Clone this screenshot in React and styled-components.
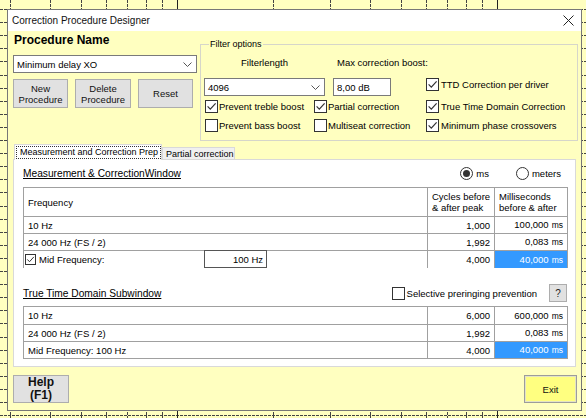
import React from 'react';
import styled, { createGlobalStyle } from 'styled-components';

const GlobalStyle = createGlobalStyle`
  html, body { margin: 0; padding: 0; background: #ffffc0; }
  body { font-family: "Liberation Sans", Arial, sans-serif; font-size: 9.5px; color: #000; }
  * { box-sizing: border-box; }
`;

const Page = styled.div`
  position: relative;
  width: 586px;
  height: 418px;
  overflow: hidden;
  background: #ffffc0;
  padding: 9px 0 0 7px;
`;

const GridLayer = styled.svg`
  position: absolute;
  left: 0;
  top: 0;
`;

const Window = styled.div`
  position: relative;
  width: 575px;
  height: 402px;
  border: 1px solid #777;
  display: flex;
  flex-direction: column;
  background: #ffffc0;
`;

const TitleBar = styled.div`
  height: 21px;
  background: #fff;
  display: flex;
  align-items: center;
  justify-content: space-between;
  padding: 0 7px 0 4px;
  font-size: 10px;
  color: #111;
`;

const Body = styled.div`
  flex: 1;
  display: flex;
  flex-direction: column;
  padding: 0 4px 0 5px;
`;

const TopSection = styled.div`
  display: flex;
  height: 110px;
`;

const LeftCol = styled.div`
  width: 187px;
  display: flex;
  flex-direction: column;
`;

const ProcTitle = styled.div`
  margin: 2px 0 0 1px;
  font-size: 12px;
  font-weight: bold;
  line-height: 14px;
`;

const Combo = styled.div`
  width: ${p => p.$w}px;
  height: 18px;
  margin-top: ${p => p.$mt || 0}px;
  border: 1px solid #7a7a7a;
  background: #fff;
  display: flex;
  align-items: center;
  justify-content: space-between;
  padding: 0 4px 0 3px;
`;

const ButtonRow = styled.div`
  width: 180px;
  margin-top: 6px;
  display: flex;
  justify-content: space-between;
`;

const PushButton = styled.button`
  width: ${p => p.$w}px;
  height: ${p => p.$h || 29}px;
  border: 1px solid #adadad;
  background: #e1e1e1;
  font-family: inherit;
  font-size: ${p => p.$fs || 9.5}px;
  font-weight: ${p => (p.$bold ? 'bold' : 'normal')};
  line-height: ${p => p.$lh || 11}px;
  color: #111;
  padding: 0;
  text-align: center;
`;

const ExitButton = styled(PushButton)`
  background: #ffff80;
  border: 1px solid #9c9c9c;
  box-shadow: inset 0 0 0 1px #e4e4c4;
`;

const FilterGroup = styled.fieldset`
  flex: 1;
  margin: 7px -1px 0 0;
  padding: 7px 0 8px 3px;
  border: 1px solid #d6d6ca;
  height: 103px;
  min-width: 0;
`;

const Legend = styled.legend`
  padding: 0 1px;
  margin-left: 5px;
  font-size: 9px;
  line-height: 12px;
`;

const FilterGrid = styled.div`
  display: grid;
  grid-template-columns: 110px 112px 1fr;
  grid-template-rows: 21px 22px 19px 13px;
  align-items: start;
`;

const FieldLabel = styled.div`
  white-space: nowrap;
  line-height: 12px;
  width: ${p => (p.$w ? `${p.$w}px` : 'auto')};
  margin-left: ${p => p.$ml || 0}px;
  text-align: ${p => (p.$center ? 'center' : 'left')};
`;

const TextInput = styled.div`
  width: ${p => p.$w}px;
  height: 18px;
  margin-left: ${p => p.$ml || 0}px;
  border: 1px solid #7a7a7a;
  background: #fff;
  padding: 0 3px;
  display: flex;
  align-items: center;
`;

const CheckRow = styled.label`
  display: flex;
  align-items: center;
  gap: ${p => p.$gap ?? 2}px;
  white-space: nowrap;
  margin-left: ${p => p.$ml || 0}px;
  line-height: 13px;
`;

const CheckBoxBox = styled.span`
  width: ${p => p.$size}px;
  height: ${p => p.$size}px;
  border: 1px solid #333;
  background: #fff;
  display: inline-flex;
  align-items: center;
  justify-content: center;
  flex-shrink: 0;
`;

const RadioCircle = styled.span`
  width: 13px;
  height: 13px;
  border: 1px solid #333;
  border-radius: 50%;
  background: #fff;
  display: inline-flex;
  align-items: center;
  justify-content: center;
  flex-shrink: 0;
`;

const RadioDot = styled.span`
  width: 7px;
  height: 7px;
  border-radius: 50%;
  background: #333;
`;

const TabRow = styled.div`
  position: relative;
  z-index: 1;
  display: flex;
  align-items: flex-end;
  height: 16px;
  margin: 3px 0 -1px 1px;
  font-size: 9px;
`;

const Tab = styled.div`
  width: ${p => p.$w}px;
  height: ${p => (p.$active ? 16 : 13)}px;
  border: 1px solid #d9d9d9;
  border-bottom: ${p => (p.$active ? 'none' : '1px solid #d9d9d9')};
  background: ${p => (p.$active ? '#fff' : '#f0f0f0')};
  display: flex;
  align-items: ${p => (p.$active ? 'flex-start' : 'center')};
  padding: ${p => (p.$active ? '1px 1px 0 1px' : '0 3px')};
  white-space: nowrap;
`;

const FocusRing = styled.span`
  border: 1px dotted #333;
  padding: 0 2px 0 3px;
  line-height: 11px;
`;

const Panel = styled.div`
  height: 208px;
  margin-right: 1px;
  border: 1px solid #d9d9d9;
  background: #fff;
  padding: 6px 8px 0 9px;
  display: flex;
  flex-direction: column;
`;

const SectionHead = styled.div`
  display: flex;
  align-items: center;
  justify-content: space-between;
  height: ${p => p.$h || 14}px;
  margin-top: ${p => p.$mt || 0}px;
`;

const SectionTitle = styled.span`
  text-decoration: underline;
  font-size: 10.2px;
`;

const RadioGroup = styled.div`
  display: flex;
  align-items: center;
  gap: 27px;
  margin-right: 6px;
`;

const HeadRight = styled.div`
  display: flex;
  align-items: center;
  gap: 12px;
`;

const HelpSquare = styled.button`
  width: 18px;
  height: 18px;
  border: 1px solid #adadad;
  background: #e1e1e1;
  font-family: inherit;
  font-size: 10px;
  padding: 0;
  color: #222;
`;

const Table = styled.div`
  margin-top: ${p => p.$mt}px;
  border: 1px solid #a0a0a0;
  width: 545px;
`;

const TableRow = styled.div`
  display: grid;
  grid-template-columns: 403px 67px 73px;
  height: ${p => p.$h || 17}px;
  border-top: ${p => (p.$first ? 'none' : '1px solid #a0a0a0')};
`;

const Cell = styled.div`
  display: flex;
  align-items: center;
  justify-content: ${p => (p.$right ? 'flex-end' : 'flex-start')};
  padding: 0 4px;
  border-left: ${p => (p.$first ? 'none' : '1px solid #a0a0a0')};
  background: ${p => (p.$selected ? '#3399ff' : '#fff')};
  color: ${p => (p.$selected ? '#fff' : '#000')};
  white-space: nowrap;
  line-height: 11px;
`;

const MidCell = styled.div`
  display: grid;
  grid-template-columns: 179px 63px;
  align-items: center;
  padding-left: 1px;
  background: #fff;
`;

const Unit = styled.span`
  font-size: 8.5px;
  margin-left: 3px;
`;

const MidInput = styled.div`
  height: 18px;
  margin-top: -1px;
  border: 1px solid #555;
  display: flex;
  align-items: center;
  justify-content: flex-end;
  padding-right: 3px;
`;

const BottomBar = styled.div`
  flex: 1;
  display: flex;
  justify-content: space-between;
  align-items: flex-start;
  padding-top: 8px;
`;

const Chevron = () => (
  <svg width="9" height="5" viewBox="0 0 9 5">
    <path d="M0.5 0.5 L4.5 4.5 L8.5 0.5" fill="none" stroke="#555" strokeWidth="1" />
  </svg>
);

const CloseIcon = () => (
  <svg width="11" height="11" viewBox="0 0 11 11">
    <path d="M0.5 0.5 L10.5 10.5 M10.5 0.5 L0.5 10.5" stroke="#222" strokeWidth="1" />
  </svg>
);

const Check = ({ checked, size = 13 }) => (
  <CheckBoxBox $size={size}>
    {checked && (
      <svg width={size - 2} height={size - 2} viewBox="0 0 11 11">
        <path d="M1.6 5.4 L4.3 8.2 L9.6 2.3" fill="none" stroke="#333" strokeWidth="1.2" />
      </svg>
    )}
  </CheckBoxBox>
);

const Radio = ({ checked }) => <RadioCircle>{checked && <RadioDot />}</RadioCircle>;

const Ms = ({ v }) => (
  <span>
    {v}
    <Unit>ms</Unit>
  </span>
);

// log frequency grid of the chart behind the dialog
const ChartGrid = () => {
  const dec0 = 177;
  const span = 320;
  const xs = [];
  for (let k = 3; k <= 9; k++) xs.push({ x: dec0 - span * Math.log10(10 / k), solid: false });
  xs.push({ x: dec0, solid: true });
  for (let k = 2; k <= 9; k++) xs.push({ x: dec0 + span * Math.log10(k), solid: false });
  xs.push({ x: dec0 + span, solid: true });
  const ys = [];
  for (let i = 0; i < 33; i++) ys.push(9 + 13.1 * i);
  return (
    <GridLayer width="586" height="418">
      {ys.map(y => (
        <line key={'h' + y} x1="0" x2="586" y1={Math.round(y) + 0.5} y2={Math.round(y) + 0.5} stroke="#444" strokeDasharray="3 1" />
      ))}
      {xs.map(({ x, solid }) => (
        <line key={'v' + x} x1={Math.round(x) + 0.5} x2={Math.round(x) + 0.5} y1="0" y2="418" stroke={solid ? '#222' : '#444'} strokeDasharray={solid ? undefined : '3 1'} />
      ))}
    </GridLayer>
  );
};

const measureRows = [
  { f: '10 Hz', c: '1,000', ms: '100,000' },
  { f: '24 000 Hz (FS / 2)', c: '1,992', ms: '0,083' },
];

const subRows = [
  { f: '10 Hz', c: '6,000', ms: '600,000' },
  { f: '24 000 Hz (FS / 2)', c: '1,992', ms: '0,083' },
  { f: 'Mid Frequency: 100 Hz', c: '4,000', ms: '40,000', sel: true },
];

export default function App() {
  return (
    <>
      <GlobalStyle />
      <Page>
        <ChartGrid />
        <Window>
          <TitleBar>
            <span>Correction Procedure Designer</span>
            <CloseIcon />
          </TitleBar>
          <Body>
            <TopSection>
              <LeftCol>
                <ProcTitle>Procedure Name</ProcTitle>
                <Combo $w={184} $mt={8}>
                  <span>Minimum delay XO</span>
                  <Chevron />
                </Combo>
                <ButtonRow>
                  <PushButton $w={55}>New<br />Procedure</PushButton>
                  <PushButton $w={56}>Delete<br />Procedure</PushButton>
                  <PushButton $w={55}>Reset</PushButton>
                </ButtonRow>
              </LeftCol>
              <FilterGroup>
                <Legend>Filter options</Legend>
                <FilterGrid>
                  <FieldLabel $w={121} $center>Filterlength</FieldLabel>
                  <FieldLabel $ml={23}>Max correction boost:</FieldLabel>
                  <div />
                  <Combo $w={121}>
                    <span>4096</span>
                    <Chevron />
                  </Combo>
                  <TextInput $w={58} $ml={19}>8,00 dB</TextInput>
                  <CheckRow><Check checked />TTD Correction per driver</CheckRow>
                  <CheckRow $ml={1} $gap={1}><Check checked />Prevent treble boost</CheckRow>
                  <CheckRow $gap={1}><Check checked />Partial correction</CheckRow>
                  <CheckRow><Check checked />True Time Domain Correction</CheckRow>
                  <CheckRow $ml={1} $gap={1}><Check />Prevent bass boost</CheckRow>
                  <CheckRow $gap={1}><Check />Multiseat correction</CheckRow>
                  <CheckRow><Check checked />Minimum phase crossovers</CheckRow>
                </FilterGrid>
              </FilterGroup>
            </TopSection>

            <TabRow>
              <Tab $active $w={148}><FocusRing>Measurement and Correction Prep</FocusRing></Tab>
              <Tab $w={73}>Partial correction</Tab>
            </TabRow>
            <Panel>
              <SectionHead>
                <SectionTitle>Measurement &amp; CorrectionWindow</SectionTitle>
                <RadioGroup>
                  <CheckRow $gap={3}><Radio checked />ms</CheckRow>
                  <CheckRow $gap={3}><Radio />meters</CheckRow>
                </RadioGroup>
              </SectionHead>
              <Table $mt={7}>
                <TableRow $first $h={28}>
                  <Cell $first>Frequency</Cell>
                  <Cell>Cycles before<br />&amp; after peak</Cell>
                  <Cell>Milliseconds<br />before &amp; after</Cell>
                </TableRow>
                {measureRows.map(r => (
                  <TableRow key={r.f}>
                    <Cell $first>{r.f}</Cell>
                    <Cell $right>{r.c}</Cell>
                    <Cell $right><Ms v={r.ms} /></Cell>
                  </TableRow>
                ))}
                <TableRow>
                  <MidCell>
                    <CheckRow $gap={3}><Check checked size={11} />Mid Frequency:</CheckRow>
                    <MidInput>100 Hz</MidInput>
                  </MidCell>
                  <Cell $right>4,000</Cell>
                  <Cell $right $selected><Ms v="40,000" /></Cell>
                </TableRow>
              </Table>

              <SectionHead $h={18} $mt={16}>
                <SectionTitle>True Time Domain Subwindow</SectionTitle>
                <HeadRight>
                  <CheckRow $gap={2}><Check />Selective preringing prevention</CheckRow>
                  <HelpSquare>?</HelpSquare>
                </HeadRight>
              </SectionHead>
              <Table $mt={4}>
                {subRows.map((r, i) => (
                  <TableRow key={r.f} $first={i === 0}>
                    <Cell $first>{r.f}</Cell>
                    <Cell $right>{r.c}</Cell>
                    <Cell $right $selected={r.sel}><Ms v={r.ms} /></Cell>
                  </TableRow>
                ))}
              </Table>
            </Panel>

            <BottomBar>
              <PushButton $w={56} $h={28} $bold $fs={12} $lh={13}>Help<br />(F1)</PushButton>
              <ExitButton $w={53} $h={28}>Exit</ExitButton>
            </BottomBar>
          </Body>
        </Window>
      </Page>
    </>
  );
}
